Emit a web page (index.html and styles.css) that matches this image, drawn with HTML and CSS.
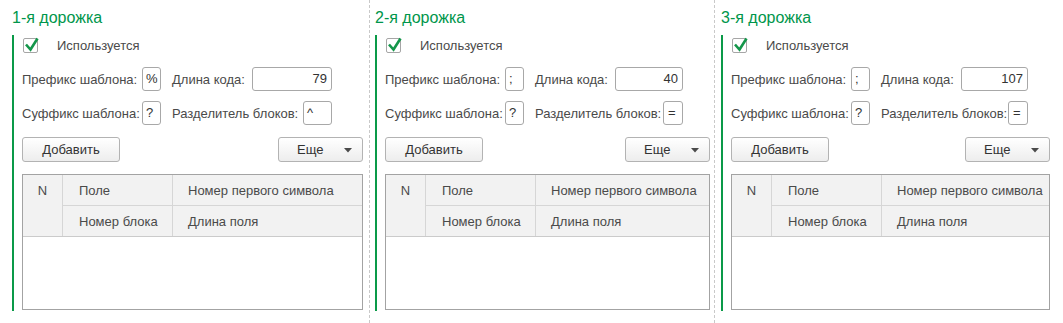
FILE: index.html
```html
<!DOCTYPE html>
<html lang="ru">
<head>
<meta charset="utf-8">
<title>Дорожки</title>
<link rel="stylesheet" href="styles.css">
</head>
<body>
<div class="page">
  <section class="lane lane-1">
    <h2 class="lane-title">1-я дорожка</h2>
    <div class="lane-body">
      <div class="check-row">
        <span class="checkbox"><svg viewBox="0 0 15 15" width="15" height="15"><path d="M3 7.5 L7.5 12.5 L14.5 1.5" fill="none" stroke="#14964a" stroke-width="2.6" stroke-linejoin="miter"/></svg></span>
        <span class="check-label">Используется</span>
      </div>
      <div class="field-row">
        <span class="lbl lbl-first">Префикс шаблона:</span>
        <span class="input input-char">%</span>
        <span class="lbl lbl-second">Длина кода:</span>
        <span class="input input-num">79</span>
      </div>
      <div class="field-row">
        <span class="lbl lbl-first">Суффикс шаблона:</span>
        <span class="input input-char">?</span>
        <span class="lbl lbl-second">Разделитель блоков:</span>
        <span class="input input-sep">^</span>
      </div>
      <div class="btn-row">
        <button class="btn btn-add">Добавить</button>
        <button class="btn btn-more">Еще<svg class="arrow" viewBox="0 0 8 5" width="8" height="5"><path d="M0 0 H8 L4 4.5 Z" fill="#4a4a4a"/></svg></button>
      </div>
      <div class="table">
        <div class="thead">
          <div class="th th-n">N</div>
          <div class="th th-a">Поле</div>
          <div class="th th-b">Номер первого символа</div>
          <div class="th th-c">Номер блока</div>
          <div class="th th-d">Длина поля</div>
        </div>
        <div class="tbody"></div>
      </div>
    </div>
  </section>
  <div class="divider"></div>
  <section class="lane lane-2">
    <h2 class="lane-title">2-я дорожка</h2>
    <div class="lane-body">
      <div class="check-row">
        <span class="checkbox"><svg viewBox="0 0 15 15" width="15" height="15"><path d="M3 7.5 L7.5 12.5 L14.5 1.5" fill="none" stroke="#14964a" stroke-width="2.6" stroke-linejoin="miter"/></svg></span>
        <span class="check-label">Используется</span>
      </div>
      <div class="field-row">
        <span class="lbl lbl-first">Префикс шаблона:</span>
        <span class="input input-char">;</span>
        <span class="lbl lbl-second">Длина кода:</span>
        <span class="input input-num">40</span>
      </div>
      <div class="field-row">
        <span class="lbl lbl-first">Суффикс шаблона:</span>
        <span class="input input-char">?</span>
        <span class="lbl lbl-second">Разделитель блоков:</span>
        <span class="input input-sep">=</span>
      </div>
      <div class="btn-row">
        <button class="btn btn-add">Добавить</button>
        <button class="btn btn-more">Еще<svg class="arrow" viewBox="0 0 8 5" width="8" height="5"><path d="M0 0 H8 L4 4.5 Z" fill="#4a4a4a"/></svg></button>
      </div>
      <div class="table">
        <div class="thead">
          <div class="th th-n">N</div>
          <div class="th th-a">Поле</div>
          <div class="th th-b">Номер первого символа</div>
          <div class="th th-c">Номер блока</div>
          <div class="th th-d">Длина поля</div>
        </div>
        <div class="tbody"></div>
      </div>
    </div>
  </section>
  <div class="divider"></div>
  <section class="lane lane-3">
    <h2 class="lane-title">3-я дорожка</h2>
    <div class="lane-body">
      <div class="check-row">
        <span class="checkbox"><svg viewBox="0 0 15 15" width="15" height="15"><path d="M3 7.5 L7.5 12.5 L14.5 1.5" fill="none" stroke="#14964a" stroke-width="2.6" stroke-linejoin="miter"/></svg></span>
        <span class="check-label">Используется</span>
      </div>
      <div class="field-row">
        <span class="lbl lbl-first">Префикс шаблона:</span>
        <span class="input input-char">;</span>
        <span class="lbl lbl-second">Длина кода:</span>
        <span class="input input-num">107</span>
      </div>
      <div class="field-row">
        <span class="lbl lbl-first">Суффикс шаблона:</span>
        <span class="input input-char">?</span>
        <span class="lbl lbl-second">Разделитель блоков:</span>
        <span class="input input-sep">=</span>
      </div>
      <div class="btn-row">
        <button class="btn btn-add">Добавить</button>
        <button class="btn btn-more">Еще<svg class="arrow" viewBox="0 0 8 5" width="8" height="5"><path d="M0 0 H8 L4 4.5 Z" fill="#4a4a4a"/></svg></button>
      </div>
      <div class="table">
        <div class="thead">
          <div class="th th-n">N</div>
          <div class="th th-a">Поле</div>
          <div class="th th-b">Номер первого символа</div>
          <div class="th th-c">Номер блока</div>
          <div class="th th-d">Длина поля</div>
        </div>
        <div class="tbody"></div>
      </div>
    </div>
  </section>
</div>
</body>
</html>
```
FILE: styles.css
```css
* { box-sizing: border-box; }

html, body {
  margin: 0;
  padding: 0;
  background: #ffffff;
}

body {
  font-family: "Liberation Sans", Arial, sans-serif;
  font-size: 13px;
  color: #4a4a4a;
}

.page {
  display: flex;
  width: 1063px;
  height: 323px;
}

.lane {
  padding-top: 8px;
}

.lane-1 { width: 369px; padding-left: 12px; padding-right: 6px; }
.lane-2 { width: 344px; padding-left: 5px; padding-right: 4px; }
.lane-3 { width: 348px; padding-left: 6px; padding-right: 13px; }

.divider {
  width: 1px;
  height: 323px;
  border-left: 1px dashed #c9c9c9;
}

.lane-title {
  margin: 0 0 7px 0;
  font-size: 16px;
  line-height: 20px;
  font-weight: normal;
  color: #00964b;
}

.lane-body {
  border-left: 2px solid #0a9a48;
  padding: 3px 0 1px 8px;
}

.check-row {
  display: flex;
  align-items: center;
  height: 15px;
  padding-left: 1px;
}

.checkbox {
  display: block;
  width: 15px;
  height: 15px;
  border: 1px solid #a6a6a6;
  border-radius: 2px;
  position: relative;
}

.checkbox svg {
  position: absolute;
  left: -1px;
  top: -2px;
  overflow: visible;
}

.check-label {
  margin-left: 19px;
  line-height: 15px;
}

.field-row {
  display: flex;
  align-items: center;
  height: 24px;
  margin-top: 10px;
}

.check-row + .field-row { margin-top: 14px; }

.lane-1 .field-row { width: 310px; }
.lane-2 .field-row { width: 298px; }
.lane-3 .field-row { width: 297px; }

.lbl { white-space: nowrap; }

.lbl-first { width: 120px; }

.lbl-second { margin-left: 11px; }

.input {
  display: block;
  height: 24px;
  border: 1px solid #a8a8a8;
  border-radius: 3px;
  background: #fff;
  line-height: 22px;
  color: #333;
  white-space: nowrap;
}

.input-char {
  width: 19px;
  padding-left: 3px;
}

.input-num {
  flex: 1;
  margin-left: 7px;
  text-align: right;
  padding-right: 4px;
}

.input-sep {
  margin-left: auto;
  padding-left: 3px;
}

.lane-1 .input-sep { width: 29px; }
.lane-2 .input-sep,
.lane-3 .input-sep { width: 20px; padding-left: 4px; }

.btn-row {
  display: flex;
  justify-content: space-between;
  margin-top: 12px;
}

.btn {
  height: 25px;
  border: 1px solid #b3b3b3;
  border-radius: 3px;
  background: linear-gradient(#ffffff, #ededed);
  font-family: inherit;
  font-size: 13px;
  color: #333;
  padding: 0;
  display: flex;
  align-items: center;
  justify-content: center;
}

.btn-add { width: 98px; }

.btn-more {
  width: 85px;
  justify-content: flex-start;
  padding-left: 18px;
}

.btn-more .arrow {
  margin-left: 21px;
  margin-top: 1px;
}

.table {
  margin-top: 12px;
  height: 136px;
  border: 1px solid #a3a3a3;
  background: #fff;
  display: flex;
  flex-direction: column;
}

.thead {
  display: grid;
  grid-template-columns: 40px 110px 1fr;
  grid-template-rows: 31px 30px;
  background: #f2f2f2;
  border-bottom: 1px solid #cbcbcb;
}

.th {
  display: flex;
  align-items: center;
  white-space: nowrap;
  overflow: hidden;
  color: #4a4a4a;
}

.th-n {
  grid-row: 1 / span 2;
  grid-column: 1;
  align-items: flex-start;
  justify-content: center;
  padding-top: 8px;
  border-right: 1px solid #d6d6d6;
}

.th-a {
  grid-row: 1;
  grid-column: 2;
  padding-left: 16px;
  border-right: 1px solid #d6d6d6;
  border-bottom: 1px solid #d6d6d6;
}

.th-b {
  grid-row: 1;
  grid-column: 3;
  padding-left: 15px;
  border-bottom: 1px solid #d6d6d6;
}

.th-c {
  grid-row: 2;
  grid-column: 2;
  padding-left: 16px;
  border-right: 1px solid #d6d6d6;
}

.th-d {
  grid-row: 2;
  grid-column: 3;
  padding-left: 15px;
}

.tbody {
  flex: 1;
}
```
